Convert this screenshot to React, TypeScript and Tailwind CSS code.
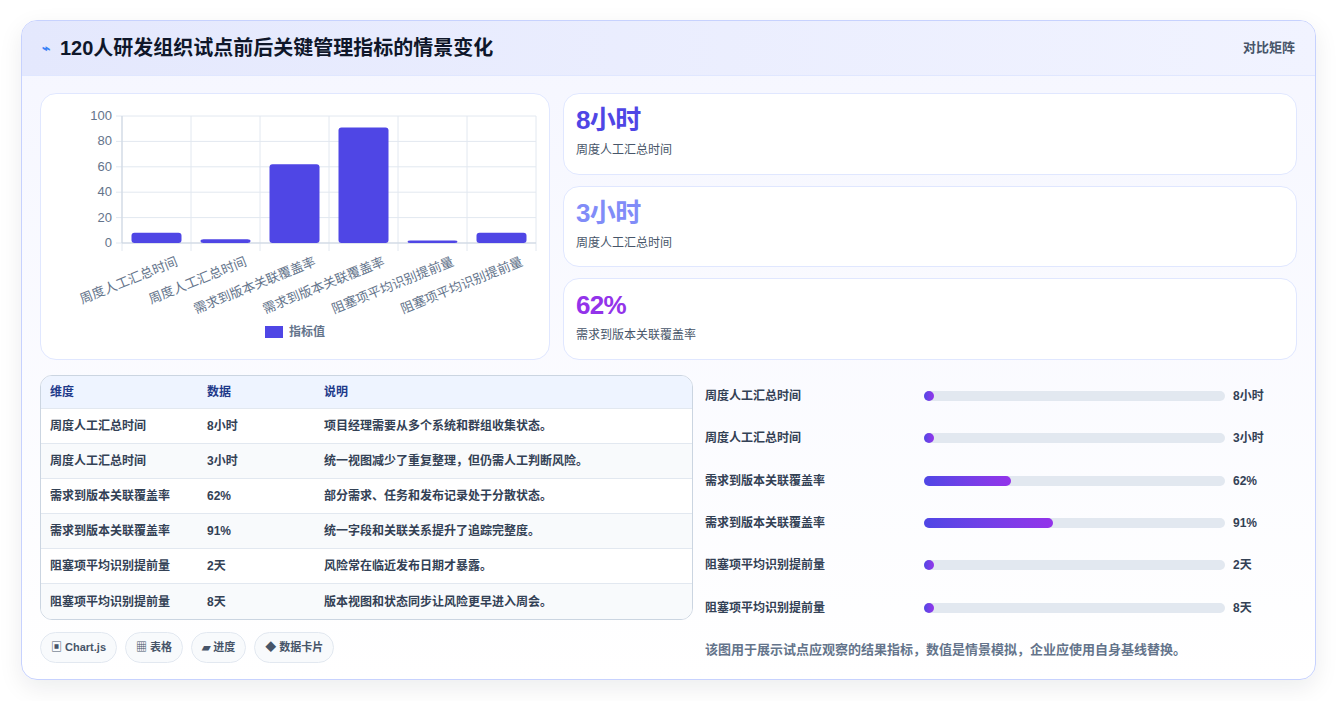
const FONT = { fontFamily: '"Liberation Sans", "Noto Sans CJK SC", sans-serif' }

const rows = [
  { k: "周度人工汇总时间", v: "8小时", d: "项目经理需要从多个系统和群组收集状态。", chart: 8, fill: 0 },
  { k: "周度人工汇总时间", v: "3小时", d: "统一视图减少了重复整理，但仍需人工判断风险。", chart: 3, fill: 0 },
  { k: "需求到版本关联覆盖率", v: "62%", d: "部分需求、任务和发布记录处于分散状态。", chart: 62, fill: 29 },
  { k: "需求到版本关联覆盖率", v: "91%", d: "统一字段和关联关系提升了追踪完整度。", chart: 91, fill: 43 },
  { k: "阻塞项平均识别提前量", v: "2天", d: "风险常在临近发布日期才暴露。", chart: 2, fill: 0 },
  { k: "阻塞项平均识别提前量", v: "8天", d: "版本视图和状态同步让风险更早进入周会。", chart: 8, fill: 0 },
]

function Chart() {
  const x0 = 81, y0 = 149, h = 127, w = 69
  return (
    <svg width="509" height="266" style={FONT}>
      {[0, 20, 40, 60, 80, 100].map((t) => {
        const y = y0 - (t / 100) * h
        return (
          <g key={t}>
            <line x1={x0 - 6} x2={x0 + w * 6} y1={y} y2={y} stroke="#e2e8f0" />
            <text x={x0 - 10} y={y + 4} textAnchor="end" fontSize="13" fill="#64748b">{t}</text>
          </g>
        )
      })}
      {[0, 1, 2, 3, 4, 5, 6].map((i) => (
        <line key={i} x1={x0 + i * w} x2={x0 + i * w} y1={y0 - h} y2={y0 + 8} stroke="#e2e8f0" />
      ))}
      <line x1={x0} x2={x0} y1={y0 - h} y2={y0} stroke="#cbd5e1" />
      <line x1={x0} x2={x0 + w * 6} y1={y0} y2={y0} stroke="#cbd5e1" />
      {rows.map((r, i) => {
        const bh = Math.max(2, (r.chart / 100) * h)
        const cx = x0 + i * w + w / 2
        return (
          <g key={i}>
            <rect x={cx - 25} y={y0 - bh} width="50" height={bh} rx="3" fill="#4f46e5" />
            <text x={cx + 22} y={y0 + 22} textAnchor="end" fontSize="13" fill="#64748b" transform={`rotate(-22 ${cx + 22} ${y0 + 22})`}>{r.k}</text>
          </g>
        )
      })}
      <rect x="224" y="232" width="18" height="12" fill="#4f46e5" />
      <text x="248" y="242" fontSize="12" fontWeight="bold" fill="#64748b">指标值</text>
    </svg>
  )
}

function Stat({ value, label, color }: { value: string; label: string; color: string }) {
  return (
    <div className="flex-1 rounded-2xl border border-[#e0e7ff] bg-white px-3 py-2.5">
      <div className={`text-[26px] font-bold leading-[32px] tracking-tight ${color}`}>{value}</div>
      <div className="mt-1.5 text-xs text-[#475569]">{label}</div>
    </div>
  )
}

export default function App() {
  return (
    <div className="h-[701px] w-[1336px] bg-white pt-5 pl-[21px]" style={FONT}>
      <div className="w-[1295px] h-[660px] overflow-hidden rounded-2xl border border-[#c7d2fe] bg-gradient-to-b from-[#f5f6ff] to-white shadow-[0_8px_24px_rgba(15,23,42,0.08)]">
        <div className="flex h-[55px] items-center justify-between border-b border-[#e0e7ff] bg-gradient-to-r from-[#e4e8fd] to-[#f1f3ff] px-5">
          <div className="flex items-center gap-2.5">
            <span className="text-sm font-bold text-[#3b82f6]">⌁</span>
            <span className="text-[20px] font-bold text-[#0f172a]">120人研发组织试点前后关键管理指标的情景变化</span>
          </div>
          <span className="text-[13px] font-bold text-[#475569]">对比矩阵</span>
        </div>
        <div className="px-[18px] pt-[17px]">
          <div className="flex gap-[13px]">
            <div className="h-[267px] w-[510px] overflow-hidden rounded-2xl border border-[#e0e7ff] bg-white">
              <Chart />
            </div>
            <div className="flex h-[267px] flex-1 flex-col gap-[11px]">
              <Stat value="8小时" label="周度人工汇总时间" color="text-[#4f46e5]" />
              <Stat value="3小时" label="周度人工汇总时间" color="text-[#818cf8]" />
              <Stat value="62%" label="需求到版本关联覆盖率" color="text-[#9333ea]" />
            </div>
          </div>
          <div className="mt-[15px] flex gap-3">
            <div className="w-[653px]">
              <div className="overflow-hidden rounded-xl border border-[#cbd5e1] bg-white text-xs">
                <div className="flex h-[33px] items-center border-b border-[#e2e8f0] bg-[#eef4ff] px-[9px] font-bold text-[#1e3a8a]">
                  <div className="w-[157px]">维度</div><div className="w-[117px]">数据</div><div>说明</div>
                </div>
                {rows.map((r, i) => (
                  <div key={i} className={`flex h-[35px] items-center px-[9px] font-bold text-[#334155] ${i < 5 ? "border-b border-[#e2e8f0]" : ""} ${i % 2 ? "bg-[#f8fafc]" : "bg-white"}`}>
                    <div className="w-[157px]">{r.k}</div><div className="w-[117px]">{r.v}</div><div>{r.d}</div>
                  </div>
                ))}
              </div>
              <div className="mt-3 flex gap-2 text-[11px] font-bold text-[#475569]">
                {["▣ Chart.js", "▦ 表格", "▰ 进度", "◆ 数据卡片"].map((t) => (
                  <span key={t} className="rounded-full border border-[#e2e8f0] bg-[#f8fafc] px-2.5 py-[6px]">{t}</span>
                ))}
              </div>
            </div>
            <div className="flex-1">
              {rows.map((r, i) => (
                <div key={i} className="flex h-[42.3px] items-center text-xs font-bold text-[#334155]">
                  <div className="w-[219px]">{r.k}</div>
                  <div className="h-[10px] w-[301px] rounded-full bg-[#e2e8f0]">
                    <div className="h-[10px] rounded-full bg-gradient-to-r from-[#4f46e5] to-[#9333ea]" style={{ width: r.fill ? `${r.fill}%` : "10px" }} />
                  </div>
                  <div className="ml-2">{r.v}</div>
                </div>
              ))}
              <div className="mt-[11px] text-[13px] font-bold text-[#64748b]">该图用于展示试点应观察的结果指标，数值是情景模拟，企业应使用自身基线替换。</div>
            </div>
          </div>
        </div>
      </div>
    </div>
  )
}
